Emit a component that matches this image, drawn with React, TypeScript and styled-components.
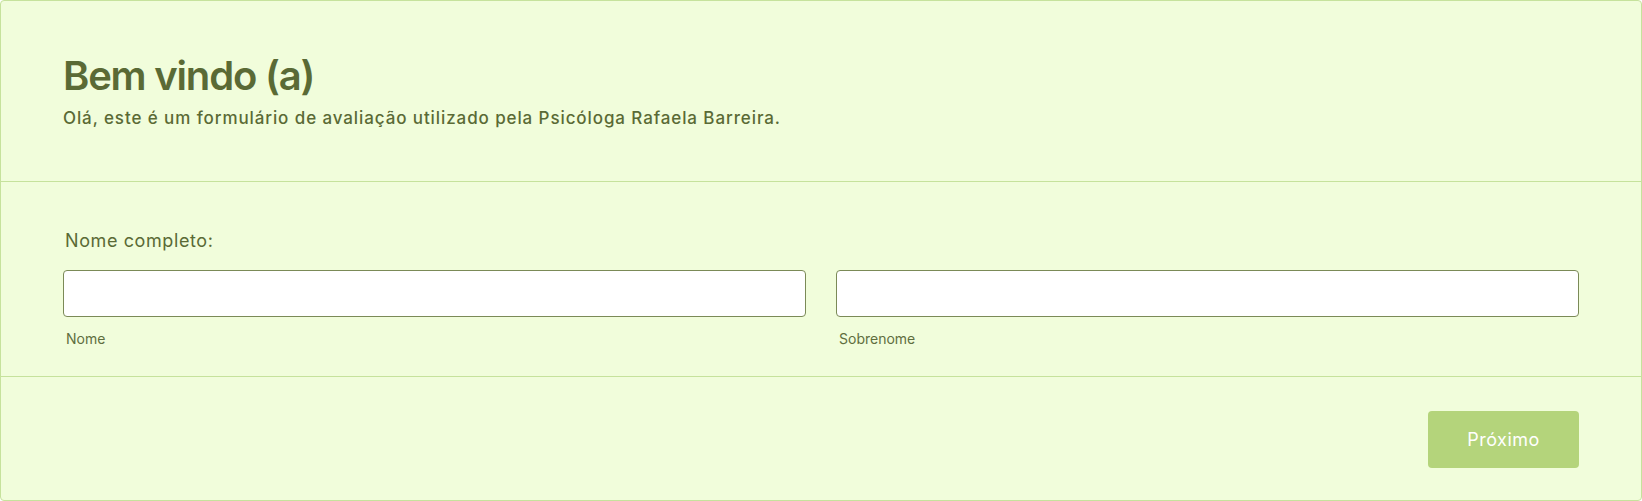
import styled, { createGlobalStyle } from 'styled-components';

const GlobalStyle = createGlobalStyle`
  html, body {
    margin: 0;
    padding: 0;
    background: #ffffff;
  }
  body {
    font-family: Inter, "Noto Sans", sans-serif;
    -webkit-font-smoothing: antialiased;
  }
  * {
    box-sizing: border-box;
  }
`;

const Card = styled.form`
  width: 1642px;
  height: 501px;
  background: #f1fddb;
  border: 1px solid #c6e29c;
  border-radius: 4px;
  display: flex;
  flex-direction: column;
  color: #5a6a35;
`;

const Section = styled.section<{ $height: number }>`
  height: ${(p) => p.$height}px;
  padding: 0 62px 0 62px;
  border-bottom: 1px solid #c6e29c;
  &:last-child {
    border-bottom: none;
  }
`;

const Header = styled(Section)`
  padding-top: 51px;
`;

const Title = styled.h1`
  margin: 0;
  font-size: 40px;
  line-height: 48px;
  font-weight: 600;
  letter-spacing: -1.2px;
`;

const Subtitle = styled.p`
  margin: 7px 0 0;
  font-size: 17px;
  line-height: 22px;
  font-weight: 500;
  letter-spacing: 0.9px;
`;

const FieldBlock = styled(Section)`
  padding-top: 48px;
`;

const Label = styled.label`
  display: block;
  font-size: 18px;
  line-height: 22px;
  font-weight: 400;
  letter-spacing: 0.6px;
  margin-left: 2px;
`;

const Row = styled.div`
  display: grid;
  grid-template-columns: 1fr 1fr;
  column-gap: 30px;
  margin-top: 18px;
`;

const Field = styled.div`
  display: flex;
  flex-direction: column;
`;

const Input = styled.input`
  height: 47px;
  width: 100%;
  background: #ffffff;
  border: 1px solid #7b8a57;
  border-radius: 4px;
  outline: none;
  font: inherit;
  padding: 0 12px;
`;

const Hint = styled.span`
  margin-top: 14px;
  margin-left: 3px;
  font-size: 14px;
  line-height: 16px;
  color: #5f6e3e;
`;

const Footer = styled(Section)`
  display: flex;
  justify-content: flex-end;
  align-items: flex-start;
  padding-top: 34px;
`;

const NextButton = styled.button`
  width: 151px;
  height: 57px;
  border: none;
  border-radius: 4px;
  background: #b4d47b;
  color: #ffffff;
  font-family: Inter, "Noto Sans", sans-serif;
  font-size: 18px;
  font-weight: 400;
  letter-spacing: 0.5px;
  cursor: pointer;
`;

export default function App() {
  return (
    <>
      <GlobalStyle />
      <Card onSubmit={(e) => e.preventDefault()}>
        <Header $height={181}>
          <Title>Bem vindo (a)</Title>
          <Subtitle>
            Olá, este é um formulário de avaliação utilizado pela Psicóloga Rafaela Barreira.
          </Subtitle>
        </Header>
        <FieldBlock $height={195}>
          <Label htmlFor="first">Nome completo:</Label>
          <Row>
            <Field>
              <Input id="first" type="text" />
              <Hint>Nome</Hint>
            </Field>
            <Field>
              <Input id="last" type="text" />
              <Hint>Sobrenome</Hint>
            </Field>
          </Row>
        </FieldBlock>
        <Footer $height={123}>
          <NextButton type="submit">Próximo</NextButton>
        </Footer>
      </Card>
    </>
  );
}
